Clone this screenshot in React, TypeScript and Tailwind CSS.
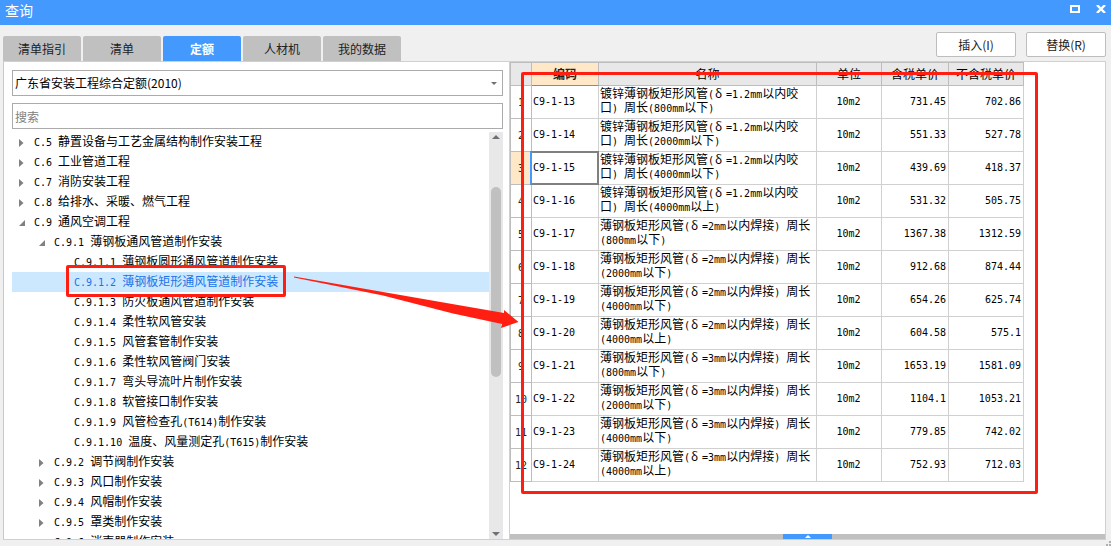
import { Fragment } from "react";

const tabs = ["清单指引", "清单", "定额", "人材机", "我的数据"];
const activeTab = "定额";

type TreeNode = { label: string; level: 0 | 1 | 2; state?: "open" | "closed" };

const tree: TreeNode[] = [
  { label: "C.5 静置设备与工艺金属结构制作安装工程", level: 0, state: "closed" },
  { label: "C.6 工业管道工程", level: 0, state: "closed" },
  { label: "C.7 消防安装工程", level: 0, state: "closed" },
  { label: "C.8 给排水、采暖、燃气工程", level: 0, state: "closed" },
  { label: "C.9 通风空调工程", level: 0, state: "open" },
  { label: "C.9.1 薄钢板通风管道制作安装", level: 1, state: "open" },
  { label: "C.9.1.1 薄钢板圆形通风管道制作安装", level: 2 },
  { label: "C.9.1.2 薄钢板矩形通风管道制作安装", level: 2 },
  { label: "C.9.1.3 防火板通风管道制作安装", level: 2 },
  { label: "C.9.1.4 柔性软风管安装", level: 2 },
  { label: "C.9.1.5 风管套管制作安装", level: 2 },
  { label: "C.9.1.6 柔性软风管阀门安装", level: 2 },
  { label: "C.9.1.7 弯头导流叶片制作安装", level: 2 },
  { label: "C.9.1.8 软管接口制作安装", level: 2 },
  { label: "C.9.1.9 风管检查孔(T614)制作安装", level: 2 },
  { label: "C.9.1.10 温度、风量测定孔(T615)制作安装", level: 2 },
  { label: "C.9.2 调节阀制作安装", level: 1, state: "closed" },
  { label: "C.9.3 风口制作安装", level: 1, state: "closed" },
  { label: "C.9.4 风帽制作安装", level: 1, state: "closed" },
  { label: "C.9.5 罩类制作安装", level: 1, state: "closed" },
  { label: "C.9.6 消声器制作安装", level: 1, state: "closed" },
];
const selectedNode = 7;

const indent = ["pl-[7px]", "pl-[27px]", "pl-[47px]"];

const rows = [
  ["C9-1-13", "镀锌薄钢板矩形风管(δ=1.2mm以内咬口) 周长(800mm以下)", "731.45", "702.86"],
  ["C9-1-14", "镀锌薄钢板矩形风管(δ=1.2mm以内咬口) 周长(2000mm以下)", "551.33", "527.78"],
  ["C9-1-15", "镀锌薄钢板矩形风管(δ=1.2mm以内咬口) 周长(4000mm以下)", "439.69", "418.37"],
  ["C9-1-16", "镀锌薄钢板矩形风管(δ=1.2mm以内咬口) 周长(4000mm以上)", "531.32", "505.75"],
  ["C9-1-17", "薄钢板矩形风管(δ=2mm以内焊接) 周长(800mm以下)", "1367.38", "1312.59"],
  ["C9-1-18", "薄钢板矩形风管(δ=2mm以内焊接) 周长(2000mm以下)", "912.68", "874.44"],
  ["C9-1-19", "薄钢板矩形风管(δ=2mm以内焊接) 周长(4000mm以下)", "654.26", "625.74"],
  ["C9-1-20", "薄钢板矩形风管(δ=2mm以内焊接) 周长(4000mm以上)", "604.58", "575.1"],
  ["C9-1-21", "薄钢板矩形风管(δ=3mm以内焊接) 周长(800mm以下)", "1653.19", "1581.09"],
  ["C9-1-22", "薄钢板矩形风管(δ=3mm以内焊接) 周长(2000mm以下)", "1104.1", "1053.21"],
  ["C9-1-23", "薄钢板矩形风管(δ=3mm以内焊接) 周长(4000mm以下)", "779.85", "742.02"],
  ["C9-1-24", "薄钢板矩形风管(δ=3mm以内焊接) 周长(4000mm以上)", "752.93", "712.03"],
];
const selectedRow = 2;

const cell = "border-r border-b border-[#d0d0d0] pt-0 pr-0.5 pb-1 pl-px";
const head = "border-t border-r border-b border-[#bdbdbd] p-0 font-normal";

// Latin runs are set half as wide as a Chinese character
function Mixed({ text }: { text: string }) {
  return (
    <>
      {text.split(/([\x20-\x7e]+|δ)/).map((part, i) => {
        if (part === "δ") {
          return (
            <span key={i} className="inline-block w-3 pl-px leading-none">
              {part}
            </span>
          );
        }
        if (i % 2 === 1) {
          return (
            <span key={i} className="font-['DejaVu_Sans_Mono',monospace] text-[10px] leading-none">
              {part}
            </span>
          );
        }
        return <Fragment key={i}>{part}</Fragment>;
      })}
    </>
  );
}

function NodeArrow({ state }: { state?: "open" | "closed" }) {
  return (
    <span className="w-[15px] shrink-0">
      {state === "closed" && (
        <svg width="5" height="8" viewBox="0 0 5 8" className="mt-1">
          <path d="M0 0 L4.5 4 L0 8 Z" fill="#808080" />
        </svg>
      )}
      {state === "open" && (
        <svg width="6" height="6" viewBox="0 0 6 6" className="mt-1">
          <path d="M6 0 V6 H0 Z" fill="#808080" />
        </svg>
      )}
    </span>
  );
}

function TitleBar() {
  return (
    <header className="flex h-[25px] shrink-0 items-start justify-between bg-[#4499ff] px-[5px] text-white">
      <h1 className="text-sm leading-5">查询</h1>
      <div className="flex gap-4 pt-[5px]">
        <button aria-label="最大化">
          <svg width="10" height="8" viewBox="0 0 10 8" className="block">
            <path d="M1 1 H9 V7 H1 Z" fill="none" stroke="#fff" strokeWidth="2" />
          </svg>
        </button>
        <button aria-label="关闭">
          <svg width="10" height="8" viewBox="0 0 10 8" className="block">
            <path d="M1 0 L9 8 M9 0 L1 8" stroke="#fff" strokeWidth="2.4" />
          </svg>
        </button>
      </div>
    </header>
  );
}

function TreePanel() {
  return (
    <section className="flex w-[506px] shrink-0 flex-col border-l border-[#c8c8c8] pt-2 pr-1.5 pl-2">
      <div className="relative">
        <select
          aria-label="定额库"
          className="block h-[26px] w-full appearance-none rounded-none border border-[#ababab] bg-white pl-0.5 text-xs text-black"
        >
          <option>广东省安装工程综合定额(2010)</option>
        </select>
        <svg width="6" height="3" viewBox="0 0 6 3" className="pointer-events-none absolute top-3 right-1.5">
          <path d="M0 0 H6 L3 3 Z" fill="#707078" />
        </svg>
      </div>
      <input
        type="text"
        aria-label="搜索"
        placeholder="搜索"
        className="mt-[7px] h-[26px] w-full border border-[#ababab] bg-white pl-0.5 text-xs placeholder:text-[#808080]"
      />
      <div className="mt-[3px] flex min-h-0 flex-1">
        <ul className="min-w-0 flex-1 overflow-hidden">
          {tree.map((node, i) => (
            <li key={node.label}>
              <button
                className={`flex h-5 w-full items-center pb-0.5 text-left whitespace-pre ${indent[node.level]} ${
                  i === selectedNode ? "bg-[#cce8ff] text-[#1a73e8]" : "text-black"
                }`}
              >
                <NodeArrow state={node.state} />
                <span>
                  <Mixed text={node.label} />
                </span>
              </button>
            </li>
          ))}
        </ul>
        <div className="flex w-3.5 flex-col items-center justify-between bg-[#e8e8e8] py-[3px]">
          <svg width="8" height="4" viewBox="0 0 8 4">
            <path d="M0 4 L4 0 L8 4 Z" fill="#707078" />
          </svg>
          <div className="mt-12 h-[190px] w-2.5 rounded-full bg-[#c0c0c0]" />
          <div className="flex-1" />
          <svg width="8" height="4" viewBox="0 0 8 4">
            <path d="M0 0 H8 L4 4 Z" fill="#707078" />
          </svg>
        </div>
      </div>
    </section>
  );
}

function QuotaTable() {
  return (
    <table className="w-[514px] table-fixed border-separate border-spacing-0 leading-[14px] text-black">
      <colgroup>
        <col className="w-[22px]" />
        <col className="w-[67px]" />
        <col className="w-[218px]" />
        <col className="w-[65px]" />
        <col className="w-[67px]" />
        <col className="w-[75px]" />
      </colgroup>
      <thead>
        <tr className="h-6 bg-[#e8e8e8]">
          <th className={`${head} border-l`} aria-label="序号" />
          <th className="border-t border-r border-b border-t-[#bdbdbd] border-r-[#bdbdbd] border-b-[#4499ff] bg-[#ffe8c8] p-0 font-bold text-[#222]">
            编码
          </th>
          <th className={head}>名称</th>
          <th className={head}>单位</th>
          <th className={head}>含税单价</th>
          <th className={head}>不含税单价</th>
        </tr>
      </thead>
      <tbody>
        {rows.map(([code, name, taxed, untaxed], i) => (
          <tr key={code} className="h-[33px]">
            <td
              className={`border-r border-b border-l border-[#bdbdbd] px-0 pt-0 pb-0.5 text-center text-[#222] ${
                i === selectedRow ? "bg-[#ffe8c8]" : ""
              }`}
            >
              <Mixed text={String(i + 1)} />
            </td>
            <td className={`${cell} relative`}>
              <Mixed text={code} />
              {i === selectedRow && (
                <span className="absolute -inset-y-px -right-px -left-0.5 border-2 border-[#808080] border-l-[#4499ff]" />
              )}
            </td>
            <td className={cell}>
              <Mixed text={name} />
            </td>
            <td className={`${cell} text-center`}>
              <Mixed text="10m2" />
            </td>
            <td className={`${cell} text-right`}>
              <Mixed text={taxed} />
            </td>
            <td className={`${cell} text-right`}>
              <Mixed text={untaxed} />
            </td>
          </tr>
        ))}
      </tbody>
    </table>
  );
}

export default function App() {
  return (
    <div className="relative flex h-screen flex-col overflow-hidden bg-[#f0f0f0] font-['Noto_Sans_CJK_SC',sans-serif] text-xs">
      <TitleBar />

      <div className="flex h-9 shrink-0 items-end justify-between pr-[5px] pl-[3px]">
        <nav className="flex gap-0.5">
          {tabs.map((tab) => (
            <button
              key={tab}
              className={`h-[25px] w-[78px] rounded-t-xs ${
                tab === activeTab ? "bg-[#4499ff] font-bold text-white" : "bg-[#c0c0c0] text-[#222]"
              }`}
            >
              {tab}
            </button>
          ))}
        </nav>
        <div className="flex gap-2.5 pb-1">
          {["插入(I)", "替换(R)"].map((label) => (
            <button
              key={label}
              className="h-[25px] w-20 rounded-xs border border-[#bdbdbd] bg-white text-[#222]"
            >
              {label}
            </button>
          ))}
        </div>
      </div>

      <main className="mr-[5px] mb-1.5 ml-[3px] flex min-h-0 flex-1 border-y border-r border-[#d0d0d0] bg-white">
        <TreePanel />
        <section className="flex min-w-0 flex-1 flex-col justify-between border-l border-[#d0d0d0]">
          <QuotaTable />
          <div className="flex h-[5px] justify-center bg-[#c0c0c0]">
            <button aria-label="展开" className="flex w-[49px] items-center justify-center bg-[#4499ff]">
              <svg width="6" height="3" viewBox="0 0 6 3">
                <path d="M0 3 L3 0 L6 3 Z" fill="#fff" />
              </svg>
            </button>
          </div>
        </section>
      </main>

      <svg width="5" height="5" viewBox="0 0 5 5" className="absolute right-0 bottom-0">
        <path d="M0 3 h2 v2 h-2 Z M3 3 h2 v2 h-2 Z M3 0 h2 v2 h-2 Z" fill="#b0b0b0" />
      </svg>

      {/* Annotations */}
      <div className="pointer-events-none absolute top-[265px] left-[66px] h-8 w-[220px] rounded-xs border-3 border-[#ff1f12]" />
      <div className="pointer-events-none absolute top-[72px] left-[521px] h-[422px] w-[517px] rounded-xs border-3 border-[#ff1f12]" />
      <svg
        width="226"
        height="54"
        viewBox="0 0 226 54"
        className="pointer-events-none absolute top-[275px] left-[293px]"
      >
        <path
          d="M1 1.5 L90 17 L211 38 L211 35 L225.5 47 L208 53 L209 49 L160 38.5 L90 20.5 L1 2.5 Z"
          fill="#ff1f12"
        />
      </svg>
    </div>
  );
}
